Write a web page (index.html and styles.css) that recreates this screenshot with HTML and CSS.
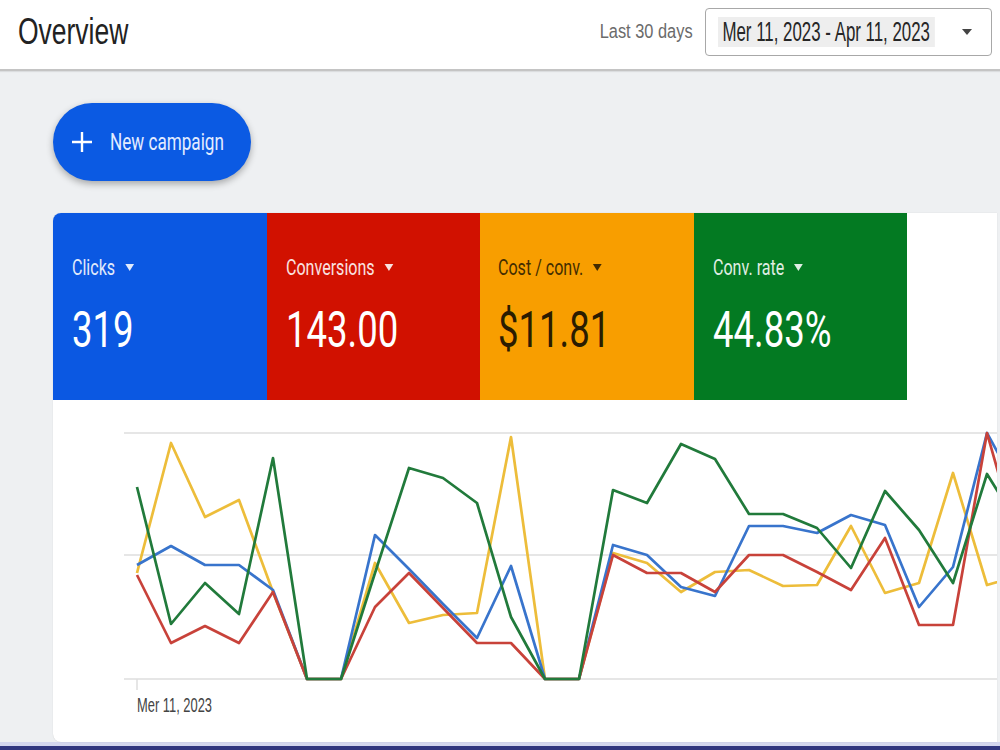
FILE: index.html
```html
<!DOCTYPE html>
<html lang="en">
<head>
<meta charset="utf-8">
<title>Overview</title>
<link rel="stylesheet" href="styles.css">
</head>
<body>
<header class="topbar">
  <h1 class="title"><span class="sq sq-title">Overview</span></h1>
  <div class="range">
    <span class="range-label">Last 30 days</span>
    <div class="date-box">
      <div class="date-value"><span class="date-text">Mer 11, 2023 - Apr 11, 2023</span></div>
      <span class="caret caret-dark"></span>
    </div>
  </div>
</header>
<main class="main">
  <button class="new-btn" type="button">
    <svg class="plus" width="20" height="24" viewBox="0 0 20 24"><path d="M10 2V22M0 12H20" stroke="#fff" stroke-width="2.4" fill="none"/></svg>
    <span class="btn-text">New campaign</span>
  </button>
  <section class="panel">
    <div class="cards">
      <div class="card card-blue"><div class="card-body"><div class="card-label">Clicks <span class="caret"></span></div><div class="card-value">319</div></div></div>
      <div class="card card-red"><div class="card-body"><div class="card-label">Conversions <span class="caret"></span></div><div class="card-value">143.00</div></div></div>
      <div class="card card-orange"><div class="card-body"><div class="card-label">Cost / conv. <span class="caret"></span></div><div class="card-value">$11.81</div></div></div>
      <div class="card card-green"><div class="card-body"><div class="card-label">Conv. rate <span class="caret"></span></div><div class="card-value">44.83%</div></div></div>
    </div>
    <svg class="chart" width="944" height="329" viewBox="53 400 944 329">
      <g stroke="#dedede" stroke-width="1.5">
        <line x1="124" y1="433" x2="997" y2="433"/>
        <line x1="124" y1="555" x2="997" y2="555"/>
        <line x1="124" y1="679" x2="997" y2="679"/>
        <line x1="137" y1="679" x2="137" y2="690"/>
      </g>
      <g fill="none" stroke-width="2.7" stroke-linejoin="round">
        <polyline stroke="#edbd3a" points="137,573 171,443 205,517 239,500 273,592 307,679 341,679 375,563 409,623 443,615 477,613 511,437 545,679 579,679 613,553 647,563 681,592 715,572 749,570 783,586 817,585 851,526 885,593 919,583 953,473 987,585 1021,575"/>
        <polyline stroke="#3874cc" points="137,565 171,546 205,565 239,565 273,590 307,679 341,679 375,535 409,569 443,604 477,638 511,566 545,679 579,679 613,545 647,555 681,587 715,596 749,526 783,526 817,533 851,515 885,525 919,607 953,567 987,433 1021,495"/>
        <polyline stroke="#c8423a" points="137,575 171,643 205,626 239,643 273,592 307,679 341,679 375,607 409,573 443,608 477,643 511,643 545,679 579,679 613,555 647,573 681,573 715,592 749,555 783,555 817,572 851,590 885,538 919,625 953,625 987,433 1021,553"/>
        <polyline stroke="#217a3b" points="137,487 171,624 205,583 239,614 273,458 307,679 341,679 375,573 409,468 443,478 477,503 511,617 545,679 579,679 613,490 647,503 681,444 715,459 749,514 783,514 817,528 851,568 885,491 919,530 953,583 987,474 1021,529"/>
      </g>
      <text class="axis-label" x="137" y="712" textLength="75" lengthAdjust="spacingAndGlyphs">Mer 11, 2023</text>
    </svg>
  </section>
</main>
<div class="bottom-bar"></div>
</body>
</html>
```

FILE: styles.css
```css
* { box-sizing: border-box; }

html, body {
  margin: 0;
  padding: 0;
  width: 1000px;
  height: 750px;
  overflow: hidden;
}

body {
  background: #eef0f2;
  font-family: "Liberation Sans", Arial, sans-serif;
  color: #202124;
}

/* ---------- top bar ---------- */
.topbar {
  height: 71px;
  background: #fff;
  border-bottom: 2px solid #c4c4c4;
  box-shadow: 0 1px 1px rgba(0, 0, 0, 0.08);
  display: flex;
  align-items: center;
  justify-content: space-between;
  padding: 0 8px 6px 18px;
}

.title {
  margin: 0;
  font-weight: 400;
  font-size: 36px;
  line-height: 36px;
  color: #222;
}

.sq {
  display: inline-block;
  transform-origin: left center;
  white-space: nowrap;
}

.sq-title { transform: scaleX(0.735); }

.range {
  display: flex;
  align-items: center;
}

.range-label {
  display: inline-block;
  font-size: 19.5px;
  color: #6b6b6b;
  white-space: nowrap;
  transform: scaleX(0.84);
  transform-origin: right center;
  margin-right: 12px;
}

.date-box {
  width: 287px;
  height: 48px;
  border: 1px solid #a8a8a8;
  border-radius: 4px;
  display: flex;
  align-items: center;
  padding: 0 19px 0 12px;
}

.date-value {
  width: 222px;
  height: 30px;
  flex: none;
  overflow: hidden;
}

.date-text {
  display: inline-block;
  white-space: nowrap;
  font-size: 27px;
  line-height: 30px;
  padding: 0 8px 0 7px;
  color: #262626;
  background: #eeeeee;
  transform: scaleX(0.625);
  transform-origin: left center;
}

.caret {
  display: inline-block;
  width: 0;
  height: 0;
  border-left: 6px solid transparent;
  border-right: 6px solid transparent;
  border-top: 7px solid currentColor;
  vertical-align: middle;
}

.caret-dark {
  margin-left: auto;
  color: #444;
  border-left-width: 5px;
  border-right-width: 5px;
  border-top-width: 6px;
}

/* ---------- main ---------- */
.main {
  padding: 32px 3px 0 53px;
  display: flex;
  flex-direction: column;
  align-items: flex-start;
  gap: 32px;
}

.new-btn {
  width: 198px;
  height: 78px;
  border: none;
  border-radius: 39px;
  background: #0b5ae3;
  box-shadow: 0 3px 7px rgba(0, 0, 0, 0.3);
  display: flex;
  align-items: center;
  padding: 0 0 0 19px;
  gap: 18px;
  cursor: pointer;
  overflow: hidden;
}

.plus { flex: none; }

.btn-text {
  flex: none;
  display: inline-block;
  font-family: Roboto, "Liberation Sans", sans-serif;
  font-size: 23px;
  color: #e3ecff;
  white-space: nowrap;
  transform: scaleX(0.745);
  transform-origin: left center;
}

.panel {
  width: 944px;
  height: 529px;
  background: #fff;
  border-radius: 8px 0 0 8px;
  overflow: hidden;
  box-shadow: 0 0 1px rgba(0, 0, 0, 0.2);
}

.cards {
  display: flex;
}

.card {
  width: 213.5px;
  height: 187px;
  padding: 42px 0 0 19px;
  font-family: Roboto, "Liberation Sans", sans-serif;
  color: #fff;
}

.card-blue { background: #0b58e2; }
.card-red { background: #d11100; }
.card-orange { background: #f89e00; color: #2b1c00; padding-left: 18px; }
.card-green { background: #037a22; }

.card-body {
  transform: scaleX(0.73);
  transform-origin: left top;
  white-space: nowrap;
}

.card-label {
  font-size: 22px;
  line-height: 26px;
  opacity: 0.88;
}

.card-label .caret {
  margin-left: 8px;
  border-left-width: 6px;
  border-right-width: 6px;
  border-top-width: 7px;
  position: relative;
  top: -2px;
}

.card-value {
  margin-top: 21px;
  font-size: 50px;
  line-height: 56px;
}

.chart {
  display: block;
}

.axis-label {
  font-family: "Liberation Sans", Arial, sans-serif;
  font-size: 21px;
  fill: #444;
}

.bottom-bar {
  height: 8px;
  background: #30367f;
  border-top: 4px solid #d3d6ee;
}
```
